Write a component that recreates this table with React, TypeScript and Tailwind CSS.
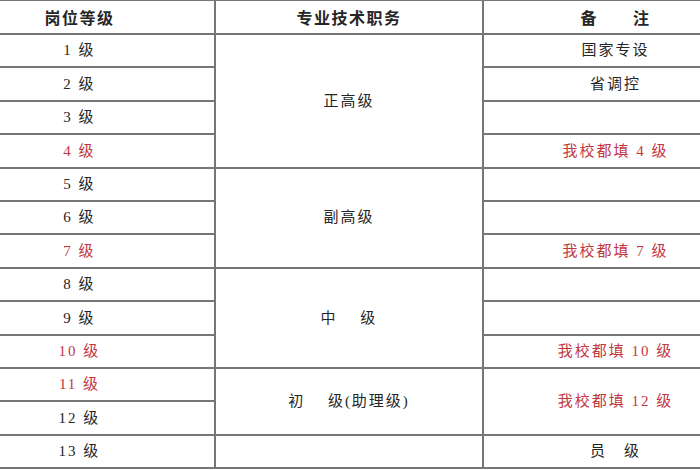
import React from "react";

const RED = "text-[#c2363f]";
const BLK = "text-[#262626]";

const cell = "bg-white flex items-center justify-center whitespace-pre";
const headCell = `${cell} ${BLK} font-bold text-[16px] tracking-[1.5px] font-['Noto_Sans_CJK_SC','Liberation_Sans',sans-serif]`;

function Lv({ t, red }: { t: string; red?: boolean }) {
  return <div className={`${cell} ${red ? RED : BLK}`}>{t}</div>;
}

function Note({ t, red, span2 }: { t?: string; red?: boolean; span2?: boolean }) {
  return (
    <div className={`${cell} ${red ? RED : BLK} ${span2 ? "row-span-2" : ""}`}>{t ?? ""}</div>
  );
}

export default function App() {
  return (
    <div className="w-[700px] h-[470px] overflow-hidden bg-white">
      <div className="ml-[-55px] w-[802px] grid grid-cols-[269px_266px_263px] grid-rows-[32px_repeat(13,31.4px)] gap-[2px] bg-[#767676] pt-px pb-[2px] text-[15px] tracking-[2px] font-['Liberation_Serif','Noto_Sans_CJK_SC',serif]">
        {/* header */}
        <div className={headCell}>岗位等级</div>
        <div className={headCell}>专业技术职务</div>
        <div className={headCell}>备　　注</div>

        {/* row 1 */}
        <Lv t="1 级" />
        <div className={`${cell} ${BLK} row-span-4`}>正高级</div>
        <Note t="国家专设" />
        {/* row 2 */}
        <Lv t="2 级" />
        <Note t="省调控" />
        {/* row 3 */}
        <Lv t="3 级" />
        <Note />
        {/* row 4 */}
        <Lv t="4 级" red />
        <Note t="我校都填 4 级" red />

        {/* row 5 */}
        <Lv t="5 级" />
        <div className={`${cell} ${BLK} row-span-3`}>副高级</div>
        <Note />
        {/* row 6 */}
        <Lv t="6 级" />
        <Note />
        {/* row 7 */}
        <Lv t="7 级" red />
        <Note t="我校都填 7 级" red />

        {/* row 8 */}
        <Lv t="8 级" />
        <div className={`${cell} ${BLK} row-span-3`}>中　 级</div>
        <Note />
        {/* row 9 */}
        <Lv t="9 级" />
        <Note />
        {/* row 10 */}
        <Lv t="10 级" red />
        <Note t="我校都填 10 级" red />

        {/* row 11 */}
        <Lv t="11 级" red />
        <div className={`${cell} ${BLK} row-span-2`}>初　 级(助理级)</div>
        <Note t="我校都填 12 级" red span2 />
        {/* row 12 */}
        <Lv t="12 级" />

        {/* row 13 */}
        <Lv t="13 级" />
        <div className={cell}></div>
        <Note t="员　级" />
      </div>
    </div>
  );
}
